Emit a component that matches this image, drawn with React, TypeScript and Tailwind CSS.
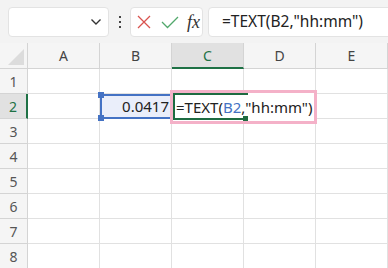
import React from "react";

const font = { fontFamily: '"Noto Sans", "Liberation Sans", sans-serif' };

function Cell({ children, className = "" }: { children?: React.ReactNode; className?: string }) {
  return <div className={"h-[25px] border-r border-b border-[#e1e1e1] " + className}>{children}</div>;
}

export default function App() {
  const rows = [1, 2, 3, 4, 5, 6, 7, 8];
  const cols = ["A", "B", "C", "D", "E"];
  return (
    <div className="w-[388px] h-[268px] overflow-hidden bg-white relative" style={font}>
      {/* toolbar */}
      <div className="h-[43px] bg-[#f3f3f3] flex items-start pt-[7px] pl-[8px] overflow-hidden">
        <div className="shrink-0 w-[101px] h-[30px] bg-white rounded-[4px] border border-[#e3e3e3] flex items-center justify-end pr-[6px]">
          <svg width="12" height="8" viewBox="0 0 12 8">
            <path d="M1.5 1.5 L6 6 L10.5 1.5" fill="none" stroke="#333" strokeWidth="1.4" />
          </svg>
        </div>
        <div className="shrink-0 w-[21px] h-[30px] flex flex-col items-center justify-center gap-[3px]">
          <div className="w-[2px] h-[2px] bg-[#444]" />
          <div className="w-[2px] h-[2px] bg-[#444]" />
          <div className="w-[2px] h-[2px] bg-[#444]" />
        </div>
        <div className="shrink-0 w-[73px] h-[30px] bg-white rounded-[4px] border border-[#e3e3e3] flex items-center pl-[6px]">
          <svg width="14" height="14" viewBox="0 0 14 14" className="mr-[10px] shrink-0">
            <path d="M1 1 L13 13 M13 1 L1 13" stroke="#d9534f" strokeWidth="1.3" fill="none" />
          </svg>
          <svg width="18" height="14" viewBox="0 0 18 14" className="mr-[8px] shrink-0">
            <path d="M1 7 L6.5 12.5 L17 2" stroke="#52a86c" strokeWidth="1.3" fill="none" />
          </svg>
          <span className="text-[18px] italic text-[#333] leading-none" style={{ fontFamily: '"Liberation Serif", "DejaVu Serif", serif' }}>
            fx
          </span>
        </div>
        <div className="shrink-0 ml-[5px] w-[200px] h-[30px] bg-white rounded-l-[4px] border border-[#e3e3e3] flex items-center pl-[13px] text-[15.5px] text-[#222] whitespace-nowrap">
          =TEXT(B2,"hh:mm")
        </div>
      </div>
      {/* grid */}
      <div className="grid grid-cols-[28px_72px_72px_72px_72px_72px]">
        {/* header row */}
        <div className="h-[26px] bg-[#f5f5f5] border-r border-b border-[#d4d4d4] flex items-end justify-end p-[3px]">
          <svg width="16" height="16" viewBox="0 0 16 16">
            <path d="M16 0 L16 16 L0 16 Z" fill="#dcdcdc" />
          </svg>
        </div>
        {cols.map((c) =>
          c === "C" ? (
            <div key={c} className="h-[26px] bg-[#e1e1e1] border-r border-[#d4d4d4] border-b-2 border-b-[#1e7145] flex items-center justify-center text-[14px] text-[#1e7145]">
              {c}
            </div>
          ) : (
            <div key={c} className="h-[26px] bg-[#f5f5f5] border-r border-b border-[#d4d4d4] flex items-center justify-center text-[14px] text-[#444]">
              {c}
            </div>
          )
        )}
        {rows.map((r) => (
          <React.Fragment key={r}>
            {r === 2 ? (
              <div className="h-[25px] bg-[#e1e1e1] border-r-2 border-r-[#1e7145] border-b border-b-[#d4d4d4] flex items-center justify-center text-[14px] text-[#1e7145]">
                {r}
              </div>
            ) : (
              <div className="h-[25px] bg-[#f5f5f5] border-r border-b border-[#d4d4d4] flex items-center justify-center text-[14px] text-[#555]">
                {r}
              </div>
            )}
            {cols.map((c) => {
              if (r === 2 && c === "B") {
                return (
                  <div key={c} className="h-[25px] relative">
                    <div className="absolute left-0 top-0 w-[72px] h-[25px] bg-[#eaeefa] border-2 border-[#4472c4] flex items-center justify-end pr-[1px] text-[15px] text-[#222]">
                      0.0417
                    </div>
                    <div className="absolute left-[-2px] top-[-2px] w-[6px] h-[6px] bg-[#4472c4]" />
                    <div className="absolute left-[-2px] top-[21px] w-[6px] h-[6px] bg-[#4472c4]" />
                  </div>
                );
              }
              if (r === 2 && c === "C") {
                return (
                  <div key={c} className="h-[25px] relative">
                    <div className="absolute left-[-2px] top-[-4px] w-[147px] h-[34px] border-[3px] border-[#f4b1c8] bg-white z-10">
                      <div className="absolute left-0 top-0 w-[75px] h-[27px] border-2 border-[#1e6b41] border-r-0" />
                      <div className="absolute left-[70px] top-[23px] w-[5px] h-[5px] bg-[#1e6b41]" />
                      <div className="absolute left-[3px] top-0 h-[28px] flex items-center text-[15px] text-[#222] whitespace-nowrap">
                        =TEXT(<span className="text-[#4472c4]">B2</span>,"hh:mm")
                      </div>
                    </div>
                  </div>
                );
              }
              return <Cell key={c} />;
            })}
          </React.Fragment>
        ))}
      </div>
    </div>
  );
}
